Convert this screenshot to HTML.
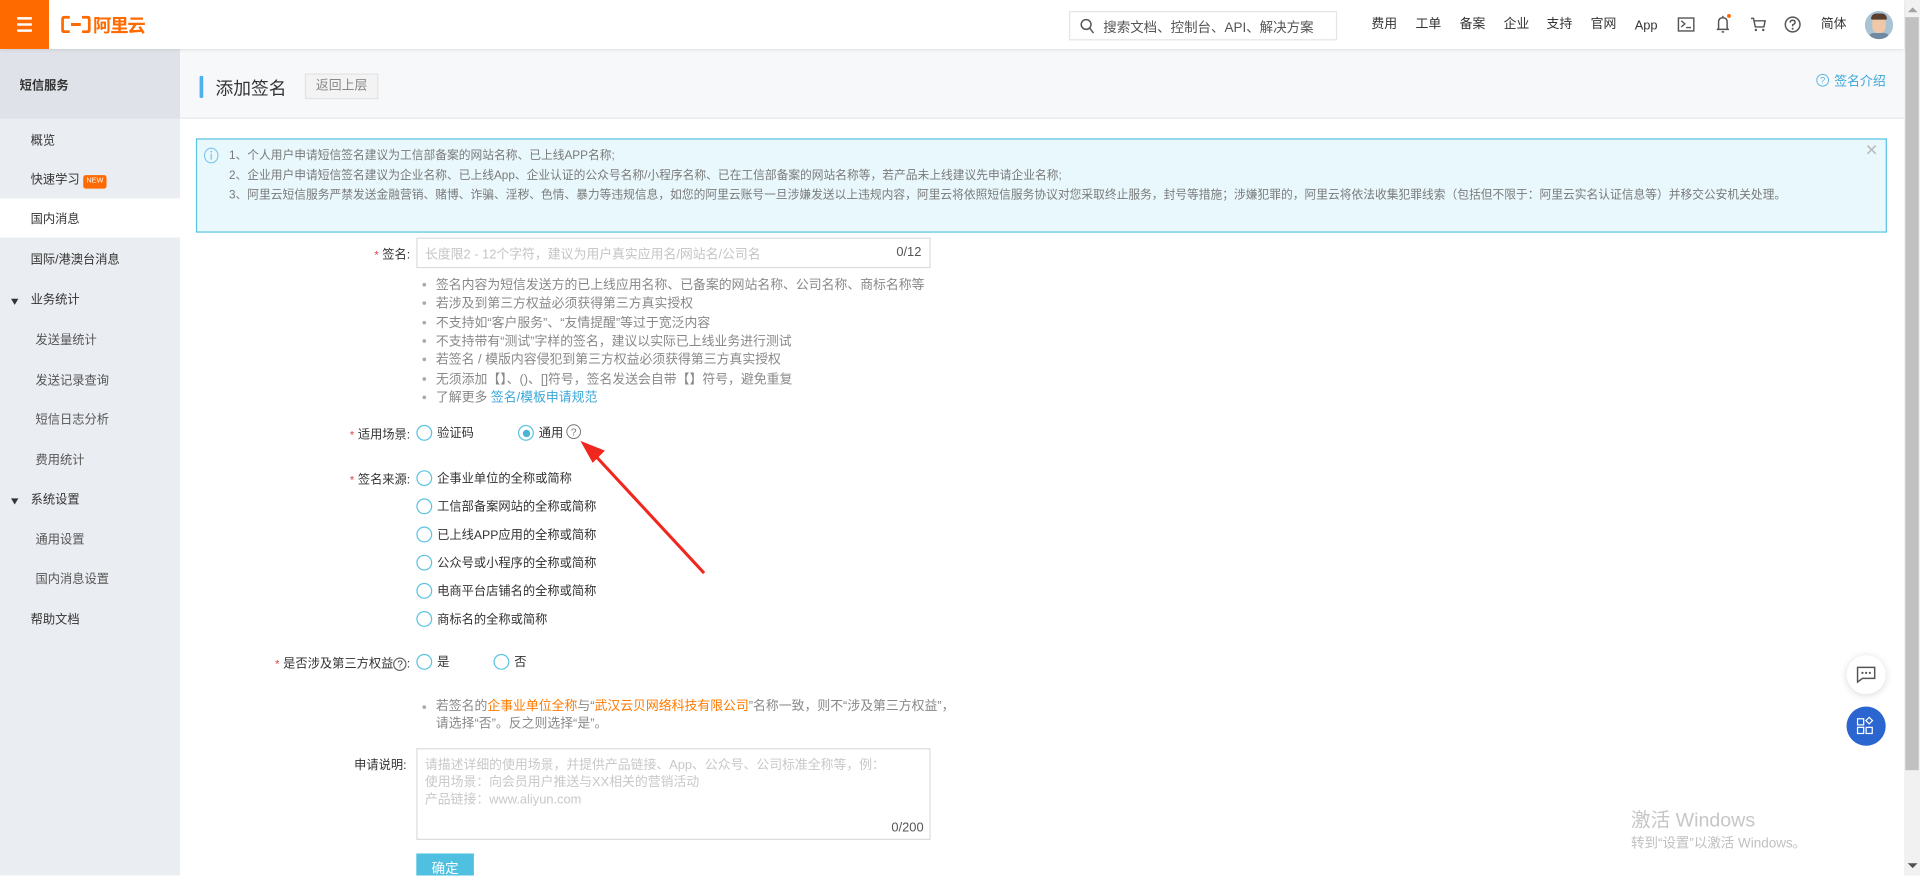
<!DOCTYPE html>
<html><head><meta charset="utf-8">
<style>
*{margin:0;padding:0;box-sizing:border-box}
html,body{width:1920px;height:876px;overflow:hidden;background:#fff}
body{font-family:"Liberation Sans","Noto Sans CJK SC",sans-serif;color:#333}
#w{position:absolute;left:0;top:0;width:1568px;height:715px;transform:scale(1.22449);transform-origin:0 0;background:#fff;overflow:hidden}
.a{position:absolute;white-space:nowrap}
.side .a{font-size:10px;color:#333;line-height:14px}
.radio{position:absolute;width:13px;height:13px;border:1px solid #5bc3e0;border-radius:50%;background:#fff}
.lbl{position:absolute;font-size:10px;color:#333;text-align:right;white-space:nowrap;line-height:14px;margin-top:2px}
.star{color:#e4393c;font-size:9px;margin-right:3px}
.opt{position:absolute;font-size:10px;color:#333;white-space:nowrap;line-height:14px;margin-top:2px}
.help{position:absolute;left:345px;font-size:10.5px;color:#888;white-space:nowrap}
.help:before{content:"";position:absolute;left:0;top:6px;width:3px;height:3px;border-radius:50%;background:#aaa}
.help span{margin-left:11px}
.nav{position:absolute;top:13px;font-size:10.5px;color:#333;line-height:14px}
</style></head><body>
<div id="w">
<div class="a" style="left:0;top:0;width:1555px;height:40px;background:#fff;box-shadow:0 1px 3px rgba(0,0,0,.12);z-index:2">
  <div class="a" style="left:0;top:0;width:40px;height:40px;background:#ff6a00">
    <div class="a" style="left:14px;top:14px;width:12px;height:2px;background:#fff"></div>
    <div class="a" style="left:14px;top:19px;width:12px;height:2px;background:#fff"></div>
    <div class="a" style="left:14px;top:24px;width:12px;height:2px;background:#fff"></div>
  </div>
  <svg class="a" style="left:50px;top:13px" width="24" height="14" viewBox="0 0 24 14"><path d="M7 1H3Q1 1 1 3V11Q1 13 3 13H7M17 1H21Q23 1 23 3V11Q23 13 21 13H17M8 7H16" fill="none" stroke="#ff6a00" stroke-width="2.4"/></svg>
  <div class="a" style="left:76px;top:10px;font-size:15px;font-weight:bold;color:#ff6a00;letter-spacing:-1px">阿里云</div>
  <div class="a" style="left:873px;top:9px;width:219px;height:24px;border:1px solid #e5e5e5;background:#fff">
    <svg class="a" style="left:8px;top:5px" width="12" height="13" viewBox="0 0 12 13"><circle cx="5" cy="5" r="4" fill="none" stroke="#555" stroke-width="1.2"/><path d="M8 8L11 12" stroke="#555" stroke-width="1.2"/></svg>
    <div class="a" style="left:27px;top:4px;font-size:11px;color:#555">搜索文档、控制台、API、解决方案</div>
  </div>
  <div class="nav" style="left:1120px">费用</div>
  <div class="nav" style="left:1156px">工单</div>
  <div class="nav" style="left:1192px">备案</div>
  <div class="nav" style="left:1228px">企业</div>
  <div class="nav" style="left:1263px">支持</div>
  <div class="nav" style="left:1299px">官网</div>
  <div class="nav" style="left:1335px;top:14px">App</div>
  <svg class="a" style="left:1370px;top:14px" width="14" height="12" viewBox="0 0 14 12"><rect x=".7" y=".7" width="12.6" height="10.6" fill="none" stroke="#555" stroke-width="1.2"/><path d="M3 3L6 5.5L3 8M7 8.5H11" fill="none" stroke="#555" stroke-width="1.1"/></svg>
  <svg class="a" style="left:1399px;top:11px" width="16" height="17" viewBox="0 0 16 17"><path d="M3 13H13M4.5 13V7Q4.5 3.5 8 3.5Q11.5 3.5 11.5 7V13M7 15H9M8 2V3.5" fill="none" stroke="#555" stroke-width="1.2"/><circle cx="13" cy="2" r="1.6" fill="#ff6a00"/></svg>
  <svg class="a" style="left:1429px;top:13px" width="14" height="14" viewBox="0 0 14 14"><path d="M1 2H3L4.5 9H11.5L12.5 4H4" fill="none" stroke="#555" stroke-width="1.2"/><circle cx="5" cy="11.5" r="1" fill="#555"/><circle cx="11" cy="11.5" r="1" fill="#555"/></svg>
  <svg class="a" style="left:1457px;top:13px" width="14" height="14" viewBox="0 0 14 14"><circle cx="7" cy="7" r="6" fill="none" stroke="#555" stroke-width="1.2"/><path d="M5 5.5Q5 3.5 7 3.5Q9 3.5 9 5.3Q9 6.5 7 7.3V8.5" fill="none" stroke="#555" stroke-width="1.2"/><circle cx="7" cy="10.5" r=".8" fill="#555"/></svg>
  <div class="nav" style="left:1487px">简体</div>
  <div class="a" style="left:1523px;top:9px;width:23px;height:23px;border-radius:50%;background:#a9c2d4;overflow:hidden">
    <div class="a" style="left:6px;top:4px;width:11px;height:14px;border-radius:5px;background:#f0c8a8"></div>
    <div class="a" style="left:5px;top:2px;width:13px;height:5px;border-radius:5px 5px 1px 1px;background:#5a3e2e"></div>
    <div class="a" style="left:3px;top:18px;width:17px;height:8px;border-radius:6px;background:#6f8aa0"></div>
  </div>
</div>
<div class="a" style="left:1555px;top:0;width:13px;height:715px;background:#f1f1f1"></div>
<div class="a" style="left:1556px;top:14px;width:11px;height:615px;background:#c1c1c1"></div>
<div class="a" style="left:1558px;top:6px;width:0;height:0;border-left:4px solid transparent;border-right:4px solid transparent;border-bottom:4px solid #a3a3a3"></div>
<div class="a" style="left:1558px;top:705px;width:0;height:0;border-left:4px solid transparent;border-right:4px solid transparent;border-top:4px solid #505050"></div>
<div class="a side" style="left:0;top:40px;width:147px;height:675px;background:#eaedf1">
  <div class="a" style="left:0;top:0;width:147px;height:57px;background:#dfe2e8"></div>
  <div class="a" style="left:16px;top:24px;font-weight:bold">短信服务</div>
  <div class="a" style="left:25px;top:69px">概览</div>
  <div class="a" style="left:25px;top:101px">快速学习</div>
  <div class="a" style="left:68px;top:103px;width:19px;height:11px;background:#ff6a00;border-radius:2px;color:#fff!important;font-size:6px!important;line-height:11px!important;text-align:center">NEW</div>
  <div class="a" style="left:0;top:122px;width:147px;height:32px;background:#fff"></div>
  <div class="a" style="left:25px;top:133px">国内消息</div>
  <div class="a" style="left:25px;top:166px">国际/港澳台消息</div>
  <div class="a" style="left:9px;top:204px;width:0;height:0;border-left:3.5px solid transparent;border-right:3.5px solid transparent;border-top:5px solid #333"></div>
  <div class="a" style="left:25px;top:199px">业务统计</div>
  <div class="a" style="left:29px;top:232px;color:#555!important">发送量统计</div>
  <div class="a" style="left:29px;top:265px;color:#555!important">发送记录查询</div>
  <div class="a" style="left:29px;top:297px;color:#555!important">短信日志分析</div>
  <div class="a" style="left:29px;top:330px;color:#555!important">费用统计</div>
  <div class="a" style="left:9px;top:367px;width:0;height:0;border-left:3.5px solid transparent;border-right:3.5px solid transparent;border-top:5px solid #333"></div>
  <div class="a" style="left:25px;top:362px">系统设置</div>
  <div class="a" style="left:29px;top:395px;color:#555!important">通用设置</div>
  <div class="a" style="left:29px;top:427px;color:#555!important">国内消息设置</div>
  <div class="a" style="left:25px;top:460px">帮助文档</div>
</div>
<div class="a" style="left:147px;top:40px;width:1408px;height:57px;background:#f7f8fa;border-bottom:1px solid #e8e8e8"></div>
<div class="a" style="left:163px;top:62px;width:3px;height:18px;background:#4fb0ef;border-radius:1px"></div>
<div class="a" style="left:176px;top:61px;font-size:14.5px;color:#333">添加签名</div>
<div class="a" style="left:249px;top:60px;width:60px;height:21px;background:#f3f3f3;border:1px solid #e3e3e3;font-size:10.5px;color:#888;text-align:center;line-height:19px">返回上层</div>
<svg class="a" style="left:1483px;top:60px" width="11" height="11" viewBox="0 0 11 11"><circle cx="5.5" cy="5.5" r="4.8" fill="none" stroke="#5bb6e0" stroke-width=".8"/><text x="5.5" y="8.3" font-size="7.5" text-anchor="middle" fill="#5bb6e0" font-family="Liberation Sans">?</text></svg>
<div class="a" style="left:1498px;top:59px;font-size:10.5px;color:#3aa6d8">签名介绍</div>
<div class="a" style="left:160px;top:113px;width:1381px;height:77px;background:#e9f8fd;border:1px solid #5bc3e0"></div>
<svg class="a" style="left:166px;top:120px" width="13" height="14" viewBox="0 0 13 14"><ellipse cx="6.5" cy="7" rx="5.5" ry="6" fill="none" stroke="#7cc5e5" stroke-width=".9"/><path d="M6.5 5.5V10.5" stroke="#7cc5e5" stroke-width="1"/><circle cx="6.5" cy="3.8" r=".7" fill="#7cc5e5"/></svg>
<div class="a" style="left:187px;top:120px;font-size:9.6px;color:#7a7a7a;line-height:16px">1、个人用户申请短信签名建议为工信部备案的网站名称、已上线APP名称;<br>2、企业用户申请短信签名建议为企业名称、已上线App、企业认证的公众号名称/小程序名称、已在工信部备案的网站名称等，若产品未上线建议先申请企业名称;<br>3、阿里云短信服务严禁发送金融营销、赌博、诈骗、淫秽、色情、暴力等违规信息，如您的阿里云账号一旦涉嫌发送以上违规内容，阿里云将依照短信服务协议对您采取终止服务，封号等措施；涉嫌犯罪的，阿里云将依法收集犯罪线索（包括但不限于：阿里云实名认证信息等）并移交公安机关处理。</div>
<div class="a" style="left:1523px;top:115px;font-size:13px;color:#bbb">✕</div>
<div class="lbl" style="right:1233px;top:199px"><span class="star">*</span>签名:</div>
<div class="a" style="left:340px;top:194px;width:420px;height:25px;border:1px solid #dcdcdc"></div>
<div class="a" style="left:347px;top:200px;font-size:10.5px;color:#c4c4c4">长度限2 - 12个字符，建议为用户真实应用名/网站名/公司名</div>
<div class="a" style="left:732px;top:200px;font-size:10.5px;color:#555">0/12</div>
<div class="help" style="top:225px"><span>签名内容为短信发送方的已上线应用名称、已备案的网站名称、公司名称、商标名称等</span></div>
<div class="help" style="top:240px"><span>若涉及到第三方权益必须获得第三方真实授权</span></div>
<div class="help" style="top:256px"><span>不支持如“客户服务”、“友情提醒”等过于宽泛内容</span></div>
<div class="help" style="top:271px"><span>不支持带有“测试”字样的签名，建议以实际已上线业务进行测试</span></div>
<div class="help" style="top:286px"><span>若签名 / 模版内容侵犯到第三方权益必须获得第三方真实授权</span></div>
<div class="help" style="top:302px"><span>无须添加【】、()、[]符号，签名发送会自带【】符号，避免重复</span></div>
<div class="help" style="top:317px"><span>了解更多 <span style="margin:0;color:#3aa6d8">签名/模板申请规范</span></span></div>
<div class="lbl" style="right:1233px;top:346px"><span class="star">*</span>适用场景:</div>
<div class="radio" style="left:340px;top:347px"></div><div class="opt" style="left:357px;top:346px">验证码</div>
<div class="radio" style="left:423px;top:347px"><div class="a" style="left:2.5px;top:2.5px;width:6px;height:6px;border-radius:50%;background:#49b3d8"></div></div>
<div class="opt" style="left:440px;top:346px">通用</div>
<svg class="a" style="left:462px;top:346px" width="13" height="13" viewBox="0 0 13 13"><circle cx="6.5" cy="6.5" r="5.6" fill="none" stroke="#777" stroke-width=".8"/><text x="6.5" y="9.5" font-size="8.5" text-anchor="middle" fill="#777" font-family="Liberation Sans">?</text></svg>
<div class="lbl" style="right:1233px;top:383px"><span class="star">*</span>签名来源:</div>
<div class="radio" style="left:340px;top:384px"></div><div class="opt" style="left:357px;top:383px">企事业单位的全称或简称</div>
<div class="radio" style="left:340px;top:407px"></div><div class="opt" style="left:357px;top:406px">工信部备案网站的全称或简称</div>
<div class="radio" style="left:340px;top:430px"></div><div class="opt" style="left:357px;top:429px">已上线APP应用的全称或简称</div>
<div class="radio" style="left:340px;top:453px"></div><div class="opt" style="left:357px;top:452px">公众号或小程序的全称或简称</div>
<div class="radio" style="left:340px;top:476px"></div><div class="opt" style="left:357px;top:475px">电商平台店铺名的全称或简称</div>
<div class="radio" style="left:340px;top:499px"></div><div class="opt" style="left:357px;top:498px">商标名的全称或简称</div>
<div class="lbl" style="right:1233px;top:533px"><span class="star">*</span>是否涉及第三方权益<span style="display:inline-block;width:11px;height:11px;border:1px solid #666;border-radius:50%;font-size:8px;line-height:9px;text-align:center;vertical-align:0">?</span>:</div>
<div class="radio" style="left:340px;top:534px"></div><div class="opt" style="left:357px;top:533px">是</div>
<div class="radio" style="left:403px;top:534px"></div><div class="opt" style="left:420px;top:533px">否</div>
<div class="help" style="left:345px;top:570px;line-height:14px"><span>若签名的<span style="margin:0;color:#ff7a00">企事业单位全称</span>与“<span style="margin:0;color:#ff7a00">武汉云贝网络科技有限公司</span>”名称一致，则不“涉及第三方权益”，</span><br><span>请选择“否”。反之则选择“是”。</span></div>
<div class="lbl" style="right:1236px;top:617px">申请说明:</div>
<div class="a" style="left:340px;top:611px;width:420px;height:75px;border:1px solid #dcdcdc"></div>
<div class="a" style="left:347px;top:618px;font-size:10.5px;color:#c8c8c8;line-height:14px">请描述详细的使用场景，并提供产品链接、App、公众号、公司标准全称等，例：<br>使用场景：向会员用户推送与XX相关的营销活动<br>产品链接：www.aliyun.com</div>
<div class="a" style="left:728px;top:670px;font-size:10.5px;color:#555">0/200</div>
<div class="a" style="left:340px;top:697px;width:47px;height:26px;background:#4fc0e0;color:#fff;font-size:11px;text-align:center;line-height:26px">确定</div>
<svg class="a" style="left:0;top:0" width="1568" height="715"><path d="M575 468L487 373" stroke="#f0271f" stroke-width="2.5"/><path d="M474 360L494 368L484 378Z" fill="#f0271f"/></svg>
<div class="a" style="left:1508px;top:535px;width:32px;height:32px;border-radius:50%;background:#fff;box-shadow:0 1px 6px rgba(0,0,0,.15)"></div>
<svg class="a" style="left:1516px;top:544px" width="16" height="14" viewBox="0 0 16 14"><path d="M1 1H15V10H5L1 13Z" fill="none" stroke="#555" stroke-width="1.2"/><circle cx="5" cy="5.5" r=".9" fill="#555"/><circle cx="8" cy="5.5" r=".9" fill="#555"/><circle cx="11" cy="5.5" r=".9" fill="#555"/></svg>
<div class="a" style="left:1508px;top:577px;width:32px;height:32px;border-radius:50%;background:#2b66d0"></div>
<svg class="a" style="left:1516px;top:585px" width="16" height="16" viewBox="0 0 16 16"><rect x="1" y="2" width="5" height="5" fill="none" stroke="#fff" stroke-width="1"/><rect x="1" y="9" width="5" height="5" fill="none" stroke="#fff" stroke-width="1"/><rect x="8" y="9" width="5" height="5" fill="none" stroke="#fff" stroke-width="1"/><path d="M10.5 0.8L13.2 3.5L10.5 6.2L7.8 3.5Z" fill="none" stroke="#fff" stroke-width="1"/></svg>
<div class="a" style="left:1332px;top:656px;font-size:16px;color:#c6c6c6">激活 Windows</div>
<div class="a" style="left:1332px;top:680px;font-size:11px;color:#c0c0c0">转到“设置”以激活 Windows。</div>
</div>
</body></html>
